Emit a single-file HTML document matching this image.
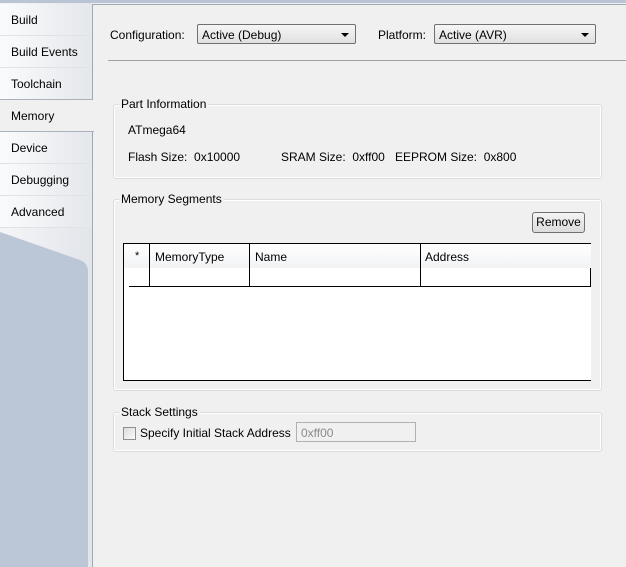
<!DOCTYPE html><html><head><style>
body{margin:0;width:626px;height:567px;background:#f0f0f0;font-family:"Liberation Sans",sans-serif;font-size:12px;color:#000;position:relative;overflow:hidden}
.a{position:absolute}
.tab{position:absolute;left:0;width:92px;height:32px;line-height:32px;padding-left:11px;box-sizing:border-box;border-bottom:1px solid #dfe2e6;background:linear-gradient(90deg,#fafbfc,#e4e7eb)}
.grp{position:absolute;border:1px solid #dcdcdc;border-radius:3px;box-shadow:inset 0 0 0 1px #fff}
.lg{position:absolute;background:#f0f0f0;padding:0 2px}
.cb{position:absolute;height:20px;border:1px solid #707070;border-radius:2px;background:linear-gradient(#f6f6f6,#e0e0e0);box-sizing:border-box;padding:3px 4px}
.cb:after{content:"";position:absolute;right:6px;top:8px;border:4px solid transparent;border-top:4px solid #000;border-bottom:0}
</style></head><body>
<div class="a" style="left:0;top:0;width:626px;height:3px;background:#b9c5d5"></div>
<div class="a" style="left:0;top:3px;width:92px;height:564px;background:linear-gradient(90deg,#f4f5f7,#e2e5ea)"></div>
<svg class="a" style="left:0;top:228px" width="92" height="339"><path d="M0 4 L80 32 Q88 35 88 44 L88 339 L0 339 Z" fill="#bbc7d7"/></svg>
<div class="tab" style="top:4px">Build</div>
<div class="tab" style="top:36px">Build Events</div>
<div class="tab" style="top:68px;border-bottom:1px solid #a9b1bb">Toolchain</div>
<div class="tab" style="top:100px;width:94px;background:#f0f0f0;border-bottom:1px solid #a9b1bb;z-index:2">Memory</div>
<div class="tab" style="top:132px">Device</div>
<div class="tab" style="top:164px">Debugging</div>
<div class="tab" style="top:196px">Advanced</div>
<div class="a" style="left:92px;top:4px;width:1px;height:563px;background:#a0a8b2"></div>
<div class="a" style="left:93px;top:4px;width:533px;height:1px;background:#a0a8b2"></div>
<div class="a" style="left:110px;top:28px">Configuration:</div>
<div class="cb" style="left:197px;top:24px;width:159px">Active (Debug)</div>
<div class="a" style="left:378px;top:28px">Platform:</div>
<div class="cb" style="left:434px;top:24px;width:162px">Active (AVR)</div>
<div class="a" style="left:108px;top:60px;width:518px;height:1px;background:#a0a0a0"></div>
<div class="grp" style="left:113px;top:104px;width:487px;height:73px"></div>
<div class="lg" style="left:119px;top:97px">Part Information</div>
<div class="a" style="left:128px;top:123px">ATmega64</div>
<div class="a" style="left:128px;top:150px">Flash Size:&nbsp; 0x10000</div>
<div class="a" style="left:281px;top:150px">SRAM Size:&nbsp; 0xff00</div>
<div class="a" style="left:395px;top:150px">EEPROM Size:&nbsp; 0x800</div>
<div class="grp" style="left:113px;top:199px;width:487px;height:190px"></div>
<div class="lg" style="left:119px;top:192px">Memory Segments</div>
<div class="a" style="left:532px;top:212px;width:53px;height:21px;border:1px solid #707070;border-radius:3px;background:linear-gradient(#f4f4f4,#dcdcdc);box-sizing:border-box;text-align:center;line-height:19px">Remove</div>
<div class="a" style="left:123px;top:243px;width:468px;height:138px;border:1px solid #000;border-right:none;background:#fff;box-sizing:border-box"></div>
<div class="a" style="left:124px;top:244px;width:467px;height:24px;background:linear-gradient(#fff,#f2f3f5)"></div>
<div class="a" style="left:129px;top:268px;width:462px;height:18px;border-bottom:1px solid #000"></div>
<div class="a" style="left:149px;top:244px;width:1px;height:43px;background:#000"></div>
<div class="a" style="left:249px;top:244px;width:1px;height:43px;background:#000"></div>
<div class="a" style="left:420px;top:244px;width:1px;height:43px;background:#000"></div>
<div class="a" style="left:590px;top:268px;width:1px;height:19px;background:#000"></div>
<div class="a" style="left:135px;top:250px;font-size:11px">*</div>
<div class="a" style="left:155px;top:250px">MemoryType</div>
<div class="a" style="left:255px;top:250px">Name</div>
<div class="a" style="left:425px;top:250px">Address</div>
<div class="grp" style="left:113px;top:412px;width:487px;height:38px"></div>
<div class="lg" style="left:119px;top:405px">Stack Settings</div>
<div class="a" style="left:123px;top:427px;width:13px;height:13px;border:1px solid #8e8f8f;box-sizing:border-box;background:linear-gradient(135deg,#dcdcdc,#fafafa)"></div>
<div class="a" style="left:140px;top:426px">Specify Initial Stack Address</div>
<div class="a" style="left:296px;top:422px;width:120px;height:20px;border:1px solid #b0b0b0;box-sizing:border-box;padding:3px 4px;color:#8a8a8a">0xff00</div>
</body></html>
